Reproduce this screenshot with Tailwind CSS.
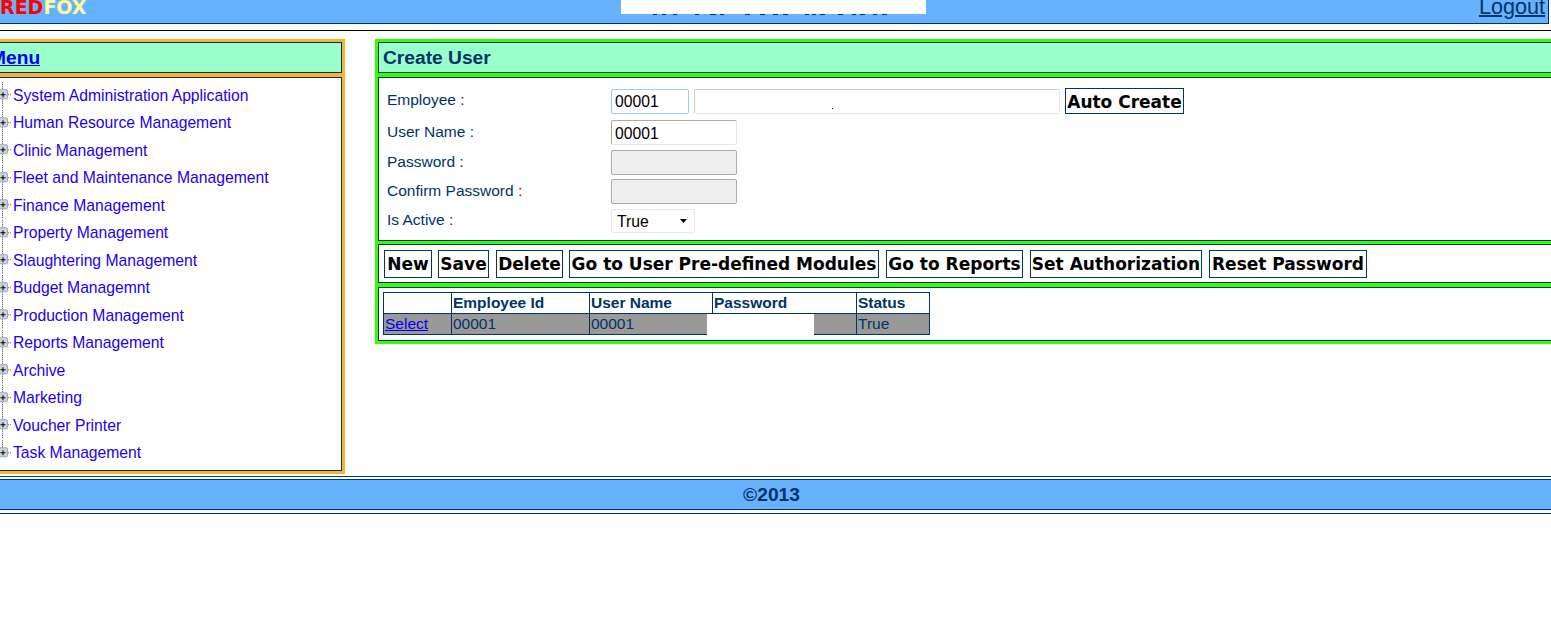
<!DOCTYPE html>
<html lang="en">
<head>
  <meta charset="UTF-8">
  <title>Create User</title>
  <script src="https://cdn.jsdelivr.net/npm/@tailwindcss/browser@4"></script>
</head>
<body class="bg-white h-[622px] w-[1551px] overflow-hidden font-['Liberation_Sans',Arial,sans-serif] text-[15.5px] text-[#003366]">

  <!-- header -->
  <header class="relative w-[1549px] h-[24px] bg-[#66b2ff] border-b border-r border-[#003366] overflow-hidden">
    <div class="absolute left-0 top-[-5px] font-['DejaVu_Sans',sans-serif] font-bold text-[19px] leading-[24px]"><span class="text-[#ff0000]">RED</span><span class="text-[#ffff99]">FOX</span></div>
    <svg class="absolute left-[645px] top-[14px] w-[250px] h-[2px]" viewBox="0 0 250 2" fill="#003366">
      <rect x="8" width="4" height="1"/><rect x="17" width="4" height="1"/><rect x="28" width="4" height="1"/><rect x="50" width="4" height="1"/><rect x="65" width="6" height="1"/><rect x="75" width="4" height="1"/><rect x="100" width="5" height="1"/><rect x="115" width="5" height="1"/><rect x="128" width="5" height="1"/><rect x="138" width="5" height="1"/><rect x="160" width="4" height="1"/><rect x="167" width="4" height="1"/><rect x="175" width="5" height="1"/><rect x="193" width="5" height="1"/><rect x="207" width="4" height="1"/><rect x="215" width="5" height="1"/><rect x="228" width="4" height="1"/><rect x="237" width="5" height="1"/>
    </svg>
    <div class="absolute left-[621px] top-0 w-[305px] h-[14px] bg-white"></div>
    <a href="#" class="absolute left-[1479px] top-[-6px] text-[21.6px] leading-[26px] underline decoration-2 text-[#003366]">Logout</a>
  </header>
  <hr class="mt-[6px] border-t border-black">

  <main class="flex items-start mt-[8px] w-[1800px]">
    <!-- menu -->
    <aside class="w-[355px] ml-[-10px] border-[3px] border-[#ffb127] bg-[#ffb127] flex flex-col gap-[4px]">
      <div class="h-[31px] pt-[2px] bg-[#99ffcc] border border-[#003366] flex items-center">
        <a href="#" class="font-bold text-[19.2px] underline text-[#0000ee] relative left-[-4px]">Menu</a>
      </div>
      <ul class="h-[394px] bg-white border border-[#003366] pt-[4px] pl-[3px] text-[15.7px]">
        <li class="h-[27.5px] flex items-center"><svg class="w-[16px] h-[27.5px]" viewBox="0 0 16 27"><use href="#node"/></svg><a href="#" class="text-[#2200ee]">System Administration Application</a></li>
        <li class="h-[27.5px] flex items-center"><svg class="w-[16px] h-[27.5px]" viewBox="0 0 16 27"><use href="#node"/></svg><a href="#" class="text-[#2200ee]">Human Resource Management</a></li>
        <li class="h-[27.5px] flex items-center"><svg class="w-[16px] h-[27.5px]" viewBox="0 0 16 27"><use href="#node"/></svg><a href="#" class="text-[#2200ee]">Clinic Management</a></li>
        <li class="h-[27.5px] flex items-center"><svg class="w-[16px] h-[27.5px]" viewBox="0 0 16 27"><use href="#node"/></svg><a href="#" class="text-[#2200ee]">Fleet and Maintenance Management</a></li>
        <li class="h-[27.5px] flex items-center"><svg class="w-[16px] h-[27.5px]" viewBox="0 0 16 27"><use href="#node"/></svg><a href="#" class="text-[#2200ee]">Finance Management</a></li>
        <li class="h-[27.5px] flex items-center"><svg class="w-[16px] h-[27.5px]" viewBox="0 0 16 27"><use href="#node"/></svg><a href="#" class="text-[#2200ee]">Property Management</a></li>
        <li class="h-[27.5px] flex items-center"><svg class="w-[16px] h-[27.5px]" viewBox="0 0 16 27"><use href="#node"/></svg><a href="#" class="text-[#2200ee]">Slaughtering Management</a></li>
        <li class="h-[27.5px] flex items-center"><svg class="w-[16px] h-[27.5px]" viewBox="0 0 16 27"><use href="#node"/></svg><a href="#" class="text-[#2200ee]">Budget Managemnt</a></li>
        <li class="h-[27.5px] flex items-center"><svg class="w-[16px] h-[27.5px]" viewBox="0 0 16 27"><use href="#node"/></svg><a href="#" class="text-[#2200ee]">Production Management</a></li>
        <li class="h-[27.5px] flex items-center"><svg class="w-[16px] h-[27.5px]" viewBox="0 0 16 27"><use href="#node"/></svg><a href="#" class="text-[#2200ee]">Reports Management</a></li>
        <li class="h-[27.5px] flex items-center"><svg class="w-[16px] h-[27.5px]" viewBox="0 0 16 27"><use href="#node"/></svg><a href="#" class="text-[#2200ee]">Archive</a></li>
        <li class="h-[27.5px] flex items-center"><svg class="w-[16px] h-[27.5px]" viewBox="0 0 16 27"><use href="#node"/></svg><a href="#" class="text-[#2200ee]">Marketing</a></li>
        <li class="h-[27.5px] flex items-center"><svg class="w-[16px] h-[27.5px]" viewBox="0 0 16 27"><use href="#node"/></svg><a href="#" class="text-[#2200ee]">Voucher Printer</a></li>
        <li class="h-[27.5px] flex items-center"><svg class="w-[16px] h-[27.5px]" viewBox="0 0 16 27"><use href="#last"/></svg><a href="#" class="text-[#2200ee]">Task Management</a></li>
      </ul>
    </aside>

    <!-- create user panel -->
    <section class="ml-[30px] w-[1300px] border-[3px] border-[#33ff00] bg-[#33ff00] flex flex-col">
      <div class="h-[31px] pt-[2px] bg-[#99ffcc] border border-[#003366] pl-[4px] flex items-center font-bold text-[19.2px]">Create User</div>

      <form class="mt-[4px] h-[164px] bg-white border border-[#003366] pl-[8px] pt-[10px]">
        <div class="flex h-[26px] items-center">
          <label class="w-[224px] -mt-[3px]">Employee :</label>
          <input value="00001" class="w-[78px] h-[25px] px-[3px] pt-[2px] text-[15.7px] text-black bg-white border border-[#a9c8e0] rounded-[2px]">
          <div class="relative ml-[5px] h-[25px]">
            <input class="w-[366px] h-[25px] bg-white border border-[#cfcfcf] border-b-[#e3e9ef] border-r-[#e3e9ef] rounded-[2px]">
            <span class="absolute left-[138px] top-[19px] w-[1px] h-[1px] bg-[#003366]"></span>
          </div>
          <button type="button" class="ml-[5px] w-[119px] h-[26px] pt-[1px] border border-[#003366] bg-white text-black font-['DejaVu_Sans',sans-serif] font-bold text-[17px] whitespace-nowrap">Auto Create</button>
        </div>
        <div class="flex h-[25px] items-center mt-[6px]">
          <label class="w-[224px] -mt-[2px]">User Name :</label>
          <input value="00001" class="w-[126px] h-[25px] px-[3px] pt-[2px] text-[15.7px] text-black bg-white border border-[#aaaaaa] border-b-[#e3e9ef] border-r-[#e3e9ef] rounded-[2px]">
        </div>
        <div class="flex h-[25px] items-center mt-[5px]">
          <label class="w-[224px] -mt-[2px]">Password :</label>
          <input disabled type="password" class="w-[126px] h-[25px] bg-[#efefef] border border-[#aaaaaa] rounded-[2px]">
        </div>
        <div class="flex h-[25px] items-center mt-[4px]">
          <label class="w-[224px] -mt-[2px]">Confirm Password :</label>
          <input disabled type="password" class="w-[126px] h-[25px] bg-[#efefef] border border-[#aaaaaa] rounded-[2px]">
        </div>
        <div class="flex h-[24px] items-center mt-[5px]">
          <label class="w-[224px] -mt-[2px]">Is Active :</label>
          <div class="w-[84px] h-[24px] pl-[5px] pr-[7px] pt-[2px] flex items-center justify-between text-black text-[15.7px] border border-[#e3e9ef] rounded-[2px]">
            <span>True</span>
            <svg class="w-[7px] h-[4px] -mt-[2px]" viewBox="0 0 7 4"><path d="M0 0h7L3.5 4z" fill="#000"/></svg>
          </div>
        </div>
      </form>

      <div class="mt-[3px] h-[39px] bg-white border border-[#003366] pl-[5px] pt-[5px] flex items-start font-['DejaVu_Sans',sans-serif] font-bold text-[17px] text-black">
        <button type="button" class="w-[48px] h-[28px] pt-[1px] border border-[#003366] whitespace-nowrap">New</button>
        <button type="button" class="ml-[6px] w-[51px] h-[28px] pt-[1px] border border-[#003366] whitespace-nowrap">Save</button>
        <button type="button" class="ml-[7px] w-[67px] h-[28px] pt-[1px] border border-[#003366] whitespace-nowrap">Delete</button>
        <button type="button" class="ml-[6px] w-[310px] h-[28px] pt-[1px] border border-[#003366] whitespace-nowrap">Go to User Pre-defined Modules</button>
        <button type="button" class="ml-[7px] w-[137px] h-[28px] pt-[1px] border border-[#003366] whitespace-nowrap">Go to Reports</button>
        <button type="button" class="ml-[7px] w-[172px] h-[28px] pt-[1px] border border-[#003366] whitespace-nowrap">Set Authorization</button>
        <button type="button" class="ml-[7px] w-[158px] h-[28px] pt-[1px] border border-[#003366] whitespace-nowrap">Reset Password</button>
      </div>

      <div class="relative mt-[4px] h-[54px] bg-white border border-[#003366] pl-[4px] pt-[4px] leading-[20px]">
        <table class="w-[547px] table-fixed border-collapse">
          <thead>
            <tr class="h-[21px] text-left">
              <th class="w-[68px] border border-[#003366] p-0"></th>
              <th class="w-[138px] border border-[#003366] px-[1px] py-0">Employee Id</th>
              <th class="w-[123px] border border-[#003366] px-[1px] py-0">User Name</th>
              <th class="w-[144px] border border-[#003366] px-[1px] py-0">Password</th>
              <th class="border border-[#003366] px-[1px] py-0">Status</th>
            </tr>
          </thead>
          <tbody>
            <tr class="h-[21px] bg-[#999999]">
              <td class="border border-[#003366] px-[1px] py-0"><a href="#" class="underline text-[#0000ee]">Select</a></td>
              <td class="border border-[#003366] px-[1px] py-0">00001</td>
              <td class="border border-[#003366] px-[1px] py-0">00001</td>
              <td class="border border-[#003366] px-[1px] py-0"></td>
              <td class="border border-[#003366] px-[1px] py-0">True</td>
            </tr>
          </tbody>
        </table>
        <div class="absolute left-[328px] top-[26px] w-[107px] h-[22px] bg-white"></div>
      </div>
    </section>
  </main>

  <!-- footer -->
  <footer class="mt-[2px]">
    <div class="border-t border-[#003366] h-[3px]"></div>
    <div class="h-[31px] bg-[#66b2ff] border-y border-[#003366] pt-[1px] pr-[8px] flex items-center justify-center font-bold text-[19.2px]">©2013</div>
    <div class="border-b border-[#003366] h-[4px]"></div>
  </footer>

  <!-- tree node glyphs -->
  <svg class="hidden">
    <defs>
      <g id="node">
        <path d="M5.5 0v7M5.5 17v10" stroke="#444" stroke-dasharray="1 1"/>
        <path d="M11 12.5h4" stroke="#666" stroke-dasharray="1 1"/>
        <rect x="1.5" y="7.5" width="9" height="9" rx="1" fill="#cdd3d6" stroke="#98aabc"/>
        <path d="M3.5 12.5h5M6 10v5" stroke="#000"/>
      </g>
      <g id="last">
        <path d="M5.5 0v7" stroke="#444" stroke-dasharray="1 1"/>
        <path d="M11 12.5h4" stroke="#666" stroke-dasharray="1 1"/>
        <rect x="1.5" y="7.5" width="9" height="9" rx="1" fill="#cdd3d6" stroke="#98aabc"/>
        <path d="M3.5 12.5h5M6 10v5" stroke="#000"/>
      </g>
    </defs>
  </svg>
</body>
</html>
